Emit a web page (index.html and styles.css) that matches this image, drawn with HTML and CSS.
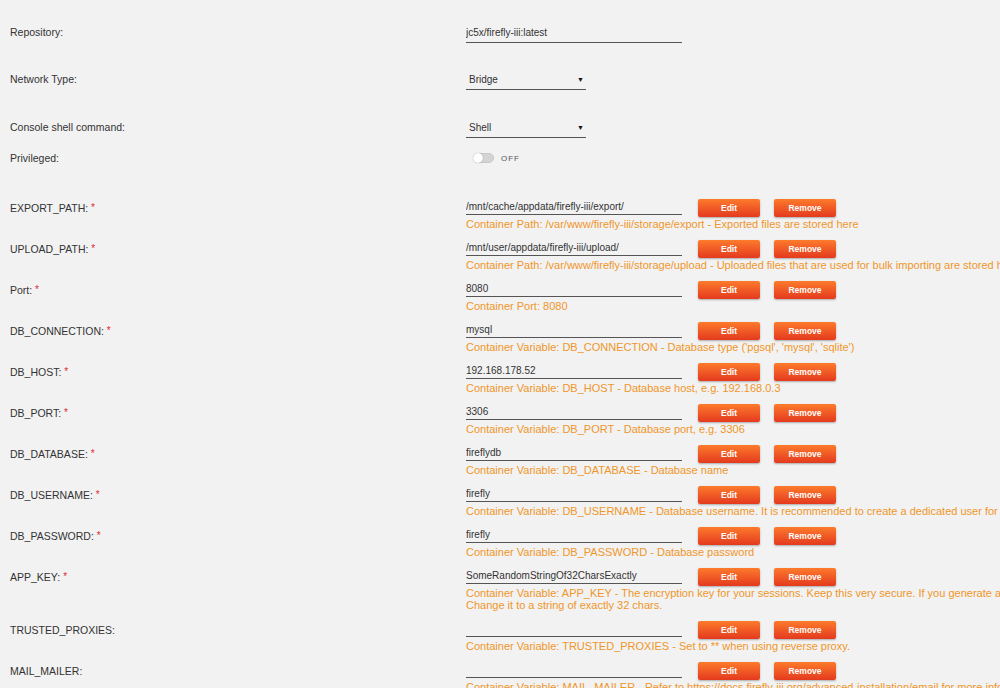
FILE: index.html
```html
<html lang="en">
<head>
    <meta charset="UTF-8">
    <meta name="viewport" content="width=device-width, initial-scale=1.0">
    <title>Update Container</title>
    <link rel="stylesheet" href="styles.css">
</head>
<body>
    <main class="template-form">
        <div class="form-row row-repo">
            <label class="form-label">Repository:</label>
            <div class="form-value">
                <input class="text-input" type="text" value="jc5x/firefly-iii:latest">
            </div>
        </div>
        <div class="form-row row-select">
            <label class="form-label">Network Type:</label>
            <div class="form-value">
                <div class="select-box"><span>Bridge</span><span class="select-arrow">&#9660;</span></div>
            </div>
        </div>
        <div class="form-row row-shell">
            <label class="form-label">Console shell command:</label>
            <div class="form-value">
                <div class="select-box"><span>Shell</span><span class="select-arrow">&#9660;</span></div>
            </div>
        </div>
        <div class="form-row row-toggle">
            <label class="form-label">Privileged:</label>
            <div class="form-value">
                <div class="switch"><span class="switch-track"><span class="switch-knob"></span></span><span class="switch-text">OFF</span></div>
            </div>
        </div>

        <!-- config entries -->
        <div class="config-row">
            <label class="form-label">EXPORT_PATH: <span class="required">*</span></label>
            <div class="form-value">
                <div class="config-line">
                    <input class="config-input" type="text" value="/mnt/cache/appdata/firefly-iii/export/">
                    <button class="btn">Edit</button>
                    <button class="btn">Remove</button>
                </div>
                <div class="config-desc">Container Path: /var/www/firefly-iii/storage/export - Exported files are stored here</div>
            </div>
        </div>
        <div class="config-row">
            <label class="form-label">UPLOAD_PATH: <span class="required">*</span></label>
            <div class="form-value">
                <div class="config-line">
                    <input class="config-input" type="text" value="/mnt/user/appdata/firefly-iii/upload/">
                    <button class="btn">Edit</button>
                    <button class="btn">Remove</button>
                </div>
                <div class="config-desc">Container Path: /var/www/firefly-iii/storage/upload - Uploaded files that are used for bulk importing are stored here</div>
            </div>
        </div>
        <div class="config-row">
            <label class="form-label">Port: <span class="required">*</span></label>
            <div class="form-value">
                <div class="config-line">
                    <input class="config-input" type="text" value="8080">
                    <button class="btn">Edit</button>
                    <button class="btn">Remove</button>
                </div>
                <div class="config-desc">Container Port: 8080</div>
            </div>
        </div>
        <div class="config-row">
            <label class="form-label">DB_CONNECTION: <span class="required">*</span></label>
            <div class="form-value">
                <div class="config-line">
                    <input class="config-input" type="text" value="mysql">
                    <button class="btn">Edit</button>
                    <button class="btn">Remove</button>
                </div>
                <div class="config-desc">Container Variable: DB_CONNECTION - Database type ('pgsql', 'mysql', 'sqlite')</div>
            </div>
        </div>
        <div class="config-row">
            <label class="form-label">DB_HOST: <span class="required">*</span></label>
            <div class="form-value">
                <div class="config-line">
                    <input class="config-input" type="text" value="192.168.178.52">
                    <button class="btn">Edit</button>
                    <button class="btn">Remove</button>
                </div>
                <div class="config-desc">Container Variable: DB_HOST - Database host, e.g. 192.168.0.3</div>
            </div>
        </div>
        <div class="config-row">
            <label class="form-label">DB_PORT: <span class="required">*</span></label>
            <div class="form-value">
                <div class="config-line">
                    <input class="config-input" type="text" value="3306">
                    <button class="btn">Edit</button>
                    <button class="btn">Remove</button>
                </div>
                <div class="config-desc">Container Variable: DB_PORT - Database port, e.g. 3306</div>
            </div>
        </div>
        <div class="config-row">
            <label class="form-label">DB_DATABASE: <span class="required">*</span></label>
            <div class="form-value">
                <div class="config-line">
                    <input class="config-input" type="text" value="fireflydb">
                    <button class="btn">Edit</button>
                    <button class="btn">Remove</button>
                </div>
                <div class="config-desc">Container Variable: DB_DATABASE - Database name</div>
            </div>
        </div>
        <div class="config-row">
            <label class="form-label">DB_USERNAME: <span class="required">*</span></label>
            <div class="form-value">
                <div class="config-line">
                    <input class="config-input" type="text" value="firefly">
                    <button class="btn">Edit</button>
                    <button class="btn">Remove</button>
                </div>
                <div class="config-desc">Container Variable: DB_USERNAME - Database username. It is recommended to create a dedicated user for Firefly III</div>
            </div>
        </div>
        <div class="config-row">
            <label class="form-label">DB_PASSWORD: <span class="required">*</span></label>
            <div class="form-value">
                <div class="config-line">
                    <input class="config-input" type="text" value="firefly">
                    <button class="btn">Edit</button>
                    <button class="btn">Remove</button>
                </div>
                <div class="config-desc">Container Variable: DB_PASSWORD - Database password</div>
            </div>
        </div>
        <div class="config-row">
            <label class="form-label">APP_KEY: <span class="required">*</span></label>
            <div class="form-value">
                <div class="config-line">
                    <input class="config-input" type="text" value="SomeRandomStringOf32CharsExactly">
                    <button class="btn">Edit</button>
                    <button class="btn">Remove</button>
                </div>
                <div class="config-desc">Container Variable: APP_KEY - The encryption key for your sessions. Keep this very secure. If you generate a new one all existing data must be considered LOST.<br>Change it to a string of exactly 32 chars.</div>
            </div>
        </div>
        <div class="config-row">
            <label class="form-label">TRUSTED_PROXIES:</label>
            <div class="form-value">
                <div class="config-line">
                    <input class="config-input" type="text" value="">
                    <button class="btn">Edit</button>
                    <button class="btn">Remove</button>
                </div>
                <div class="config-desc">Container Variable: TRUSTED_PROXIES - Set to ** when using reverse proxy.</div>
            </div>
        </div>
        <div class="config-row">
            <label class="form-label">MAIL_MAILER:</label>
            <div class="form-value">
                <div class="config-line">
                    <input class="config-input" type="text" value="">
                    <button class="btn">Edit</button>
                    <button class="btn">Remove</button>
                </div>
                <div class="config-desc">Container Variable: MAIL_MAILER - Refer to https://docs.firefly-iii.org/advanced-installation/email for more info</div>
            </div>
        </div>
    </main>
</body>
</html>
```

FILE: styles.css
```css
* {
    margin: 0;
    padding: 0;
    box-sizing: border-box;
}

html, body {
    overflow: hidden;
}

body {
    background-color: #f2f2f2;
    color: #333;
    font-family: 'Liberation Sans', Arial, sans-serif;
    font-size: 10.5px;
}

.template-form {
    padding-top: 22px;
}

.form-row,
.config-row {
    display: grid;
    grid-template-columns: 456px 1fr;
    padding-left: 10px;
}

.form-label {
    line-height: 20px;
    white-space: nowrap;
}

.required {
    color: #e0282e;
    font-size: 10px;
    position: relative;
    top: -1px;
}

/* top section */
.row-repo {
    margin-bottom: 26px;
}

.row-select {
    margin-bottom: 27px;
}

.row-shell {
    margin-bottom: 10px;
}

.row-toggle {
    margin-bottom: 31px;
}

.text-input {
    display: block;
    width: 216px;
    height: 21px;
    border: none;
    border-bottom: 1px solid #555;
    background: transparent;
    font-family: inherit;
    font-size: 10px;
    color: #333;
    outline: none;
}

.select-box {
    width: 120px;
    height: 21px;
    display: flex;
    align-items: center;
    justify-content: space-between;
    padding: 0 2px 0 3px;
    border-bottom: 1px solid #555;
    font-size: 10px;
}

.select-arrow {
    font-size: 7px;
    color: #111;
}

.switch {
    height: 20px;
    display: flex;
    align-items: center;
    gap: 7px;
    padding-left: 7px;
}

.switch-track {
    width: 21px;
    height: 10px;
    border-radius: 5px;
    background-color: #d4d4d4;
    border: 1px solid #c8c8c8;
    position: relative;
}

.switch-knob {
    position: absolute;
    left: -1px;
    top: -1px;
    width: 10px;
    height: 10px;
    border-radius: 50%;
    background-color: #fff;
    box-shadow: 0 0 1px rgba(0, 0, 0, 0.4);
}

.switch-text {
    font-size: 8px;
    letter-spacing: 1px;
    color: #555;
}

/* config entries */
.config-row {
    margin-bottom: 10px;
}

.config-row .form-label {
    line-height: 18px;
}

.config-line {
    display: flex;
    align-items: flex-start;
    height: 18px;
}

.config-input {
    display: block;
    width: 216px;
    height: 16px;
    border: none;
    border-bottom: 1px solid #555;
    background: transparent;
    font-family: inherit;
    font-size: 10px;
    color: #333;
    outline: none;
    margin-right: 16px;
}

.btn {
    width: 62px;
    height: 18px;
    margin-right: 14px;
    border: none;
    border-radius: 2px;
    background: linear-gradient(to bottom, #fd7b2c 0%, #e43a1f 100%);
    box-shadow: 0 1px 2px rgba(0, 0, 0, 0.3);
    color: #fff;
    font-family: inherit;
    font-size: 8.5px;
    font-weight: bold;
    cursor: pointer;
}

.config-desc {
    margin-top: 1px;
    line-height: 12px;
    font-size: 11px;
    color: #f0962a;
    white-space: nowrap;
}
```
